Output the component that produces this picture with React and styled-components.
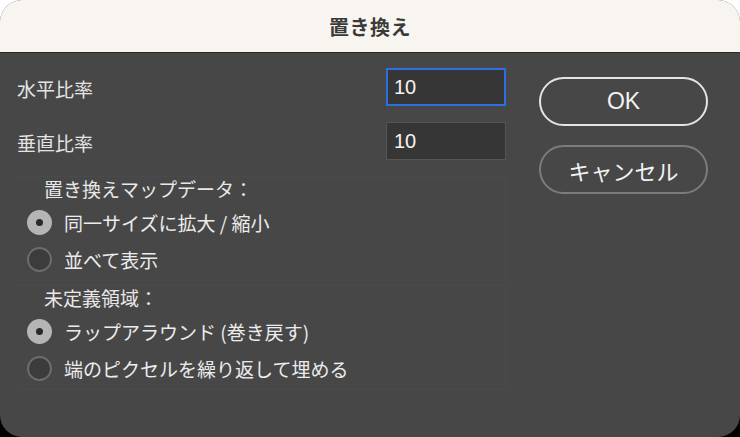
import React from 'react';
import styled, { createGlobalStyle } from 'styled-components';

const GlobalStyle = createGlobalStyle`
  html, body {
    margin: 0;
    padding: 0;
  }
  body {
    width: 740px;
    height: 437px;
    overflow: hidden;
    background: linear-gradient(#ffffff 0%, #ffffff 50%, #000000 50%, #000000 100%);
    font-family: 'Noto Sans CJK JP', 'Noto Sans', sans-serif;
  }
`;

const mapOptions = [
  { label: '同一サイズに拡大 / 縮小', checked: true },
  { label: '並べて表示', checked: false },
];

const edgeOptions = [
  { label: 'ラップアラウンド (巻き戻す)', checked: true },
  { label: '端のピクセルを繰り返して埋める', checked: false },
];

const RadioGroup = ({ title, options }) => (
  <Group>
    <GroupTitle>{title}</GroupTitle>
    <GroupRows>
      {options.map(({ label, checked }) => (
        <RadioRow key={label}>
          <RadioDot $checked={checked} />
          <RadioLabel>{label}</RadioLabel>
        </RadioRow>
      ))}
    </GroupRows>
  </Group>
);

const App = () => {
  return (
    <>
      <GlobalStyle />
      <Window>
        <TitleBar>置き換え</TitleBar>
        <Body>
          <LeftColumn>
            <FieldRow>
              <FieldLabel>水平比率</FieldLabel>
              <NumberBox $focused>10</NumberBox>
            </FieldRow>
            <FieldRow>
              <FieldLabel>垂直比率</FieldLabel>
              <NumberBox>10</NumberBox>
            </FieldRow>
            <RadioGroup title="置き換えマップデータ：" options={mapOptions} />
            <RadioGroup title="未定義領域：" options={edgeOptions} />
          </LeftColumn>
          <RightColumn>
            <PillButton $primary>OK</PillButton>
            <PillButton>キャンセル</PillButton>
          </RightColumn>
        </Body>
      </Window>
    </>
  );
};

const Window = styled.div`
  width: 740px;
  height: 437px;
  display: flex;
  flex-direction: column;
  border-radius: 22px;
  overflow: hidden;
  background-color: #474747;
`;

const TitleBar = styled.div`
  height: 52px;
  flex-shrink: 0;
  display: flex;
  align-items: center;
  justify-content: center;
  background-color: #f8f4ef;
  border-bottom: 1px solid #2c2a28;
  color: #3a3a3a;
  font-size: 20px;
  font-weight: 700;
  letter-spacing: 0.5px;
`;

const Body = styled.div`
  flex: 1;
  display: flex;
  padding: 15px 32px 0 17px;
`;

const LeftColumn = styled.div`
  width: 489px;
  display: flex;
  flex-direction: column;
  gap: 16px;
`;

const FieldRow = styled.div`
  height: 38px;
  display: flex;
  align-items: center;
  justify-content: space-between;
`;

const FieldLabel = styled.span`
  color: #e4e4e4;
  font-size: 19px;
  margin-top: 2px;
`;

const NumberBox = styled.div`
  box-sizing: border-box;
  width: 120px;
  height: 38px;
  display: flex;
  align-items: center;
  background-color: #363636;
  border: ${({ $focused }) => ($focused ? '2px solid #2b6fe0' : '1px solid #555555')};
  padding-left: ${({ $focused }) => ($focused ? '6px' : '7px')};
  color: #f4f4f4;
  font-family: 'Liberation Sans', Arial, sans-serif;
  font-size: 20px;
`;

const Group = styled.div`
  display: flex;
  flex-direction: column;
  border-top: 1px solid rgba(255, 255, 255, 0.02);
  border-right: 1px solid rgba(255, 255, 255, 0.02);
  border-bottom: 1px solid rgba(255, 255, 255, 0.02);
  padding-bottom: 2px;

  & + & {
    margin-top: -12px;
  }
`;

const GroupTitle = styled.div`
  margin-left: 27px;
  height: 24px;
  line-height: 24px;
  color: #e8e8e8;
  font-size: 19px;
`;

const GroupRows = styled.div`
  display: flex;
  flex-direction: column;
  margin-top: 3px;
`;

const RadioRow = styled.div`
  height: 37px;
  display: flex;
  align-items: center;
  gap: 12px;
  padding-left: 10px;
`;

const RadioDot = styled.span`
  box-sizing: border-box;
  width: 25px;
  height: 25px;
  border-radius: 50%;
  display: flex;
  align-items: center;
  justify-content: center;
  background-color: ${({ $checked }) => ($checked ? '#b5b5b5' : '#3c3c3c')};
  border: 2px solid ${({ $checked }) => ($checked ? '#b5b5b5' : '#6c6c6c')};

  &::after {
    content: '';
    display: ${({ $checked }) => ($checked ? 'block' : 'none')};
    width: 7px;
    height: 7px;
    border-radius: 50%;
    background-color: #2a2a2a;
  }
`;

const RadioLabel = styled.span`
  color: #ececec;
  font-size: 19px;
`;

const RightColumn = styled.div`
  margin-left: 33px;
  margin-top: 9px;
  display: flex;
  flex-direction: column;
  gap: 19px;
`;

const PillButton = styled.div`
  box-sizing: border-box;
  width: 169px;
  height: 49px;
  border-radius: 25px;
  display: flex;
  align-items: center;
  justify-content: center;
  border: 2px solid ${({ $primary }) => ($primary ? '#e4e4e4' : '#7c7c7c')};
  color: #f2f2f2;
  font-size: ${({ $primary }) => ($primary ? '23px' : '22px')};
  font-family: ${({ $primary }) =>
    $primary ? "'Liberation Sans', Arial, sans-serif" : "'Noto Sans CJK JP', sans-serif"};
`;

export default App;
